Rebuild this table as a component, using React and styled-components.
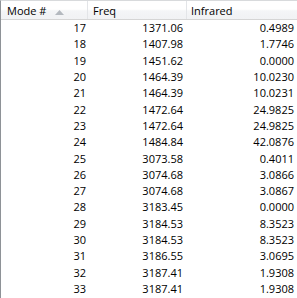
import React from "react";
import styled, { createGlobalStyle } from "styled-components";

const Global = createGlobalStyle`
  html, body { margin: 0; padding: 0; background: #fff; }
  body { width: 297px; height: 298px; overflow: hidden; }
`;

const rows = [
  [17, "1371.06", "0.4989"],
  [18, "1407.98", "1.7746"],
  [19, "1451.62", "0.0000"],
  [20, "1464.39", "10.0230"],
  [21, "1464.39", "10.0231"],
  [22, "1472.64", "24.9825"],
  [23, "1472.64", "24.9825"],
  [24, "1484.84", "42.0876"],
  [25, "3073.58", "0.4011"],
  [26, "3074.68", "3.0866"],
  [27, "3074.68", "3.0867"],
  [28, "3183.45", "0.0000"],
  [29, "3184.53", "8.3523"],
  [30, "3184.53", "8.3523"],
  [31, "3186.55", "3.0695"],
  [32, "3187.41", "1.9308"],
  [33, "3187.41", "1.9308"],
];

const cols = "87px 99px 1fr";

const List = styled.div`
  width: 297px;
  height: 298px;
  box-sizing: border-box;
  border-left: 1px solid #8e9297;
  border-top: 1px solid #d8dadc;
  font-family: "Segoe UI", "Open Sans", sans-serif;
  font-size: 11px;
  color: #000;
  overflow: hidden;
`;

const Header = styled.div`
  display: grid;
  grid-template-columns: ${cols};
  height: 18px;
  background: linear-gradient(#ffffff 0%, #ffffff 45%, #f4f5f7 55%, #f1f2f4 100%);
  border-bottom: 1px solid #d5d5d5;
`;

const HeadCell = styled.div`
  display: flex;
  align-items: center;
  padding-left: ${(p) => p.$pl}px;
  border-right: 1px solid #e3e5e8;
  box-sizing: border-box;
  position: relative;
  &:last-child { border-right: none; }
`;

const SortArrow = styled.svg`
  position: absolute;
  left: ${(p) => p.$left}px;
  top: 9px;
`;

const Row = styled.div`
  display: grid;
  grid-template-columns: ${cols};
  height: 16.3px;
  align-items: center;
`;

const Cell = styled.div`
  text-align: right;
  padding-right: ${(p) => p.$pr}px;
  line-height: 16px;
`;

export default function App() {
  return (
    <>
      <Global />
      <List>
        <Header>
          <HeadCell $pl={6}>
            Mode #
            <SortArrow $left={54} width="9" height="5" viewBox="0 0 9 5">
              <polygon points="0,5 4.5,0 9,5" fill="#b4b9bf" />
            </SortArrow>
          </HeadCell>
          <HeadCell $pl={5}>Freq</HeadCell>
          <HeadCell $pl={4}>Infrared</HeadCell>
        </Header>
        {rows.map(([m, f, i]) => (
          <Row key={m}>
            <Cell $pr={2}>{m}</Cell>
            <Cell $pr={4}>{f}</Cell>
            <Cell $pr={3}>{i}</Cell>
          </Row>
        ))}
      </List>
    </>
  );
}
